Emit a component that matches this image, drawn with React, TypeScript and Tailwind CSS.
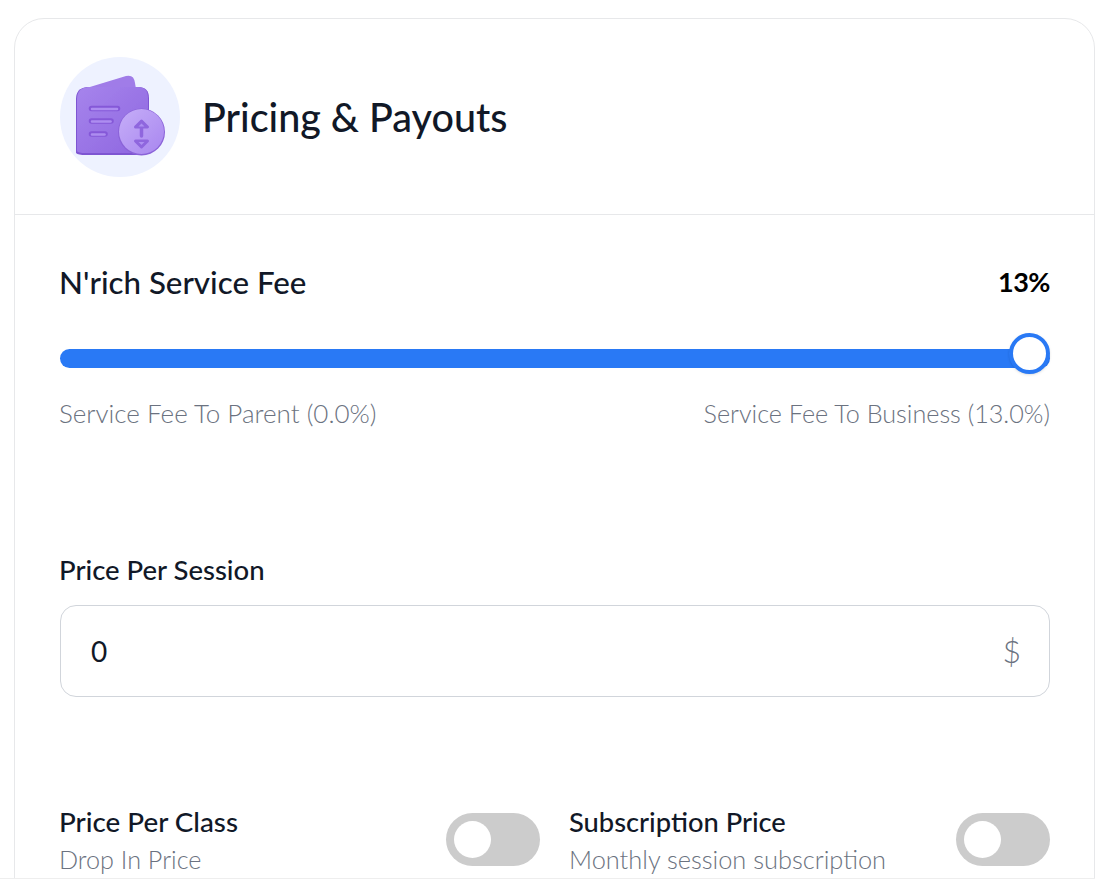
export default function App() {
  const sans = "font-['Lato','Noto_Sans',sans-serif]";
  return (
    <div className={`${sans} w-[1095px] h-[890px] bg-white overflow-hidden flex flex-col`}>
      <div className="h-[878px] pl-[14px] pt-[18px] overflow-hidden">
        <div className="w-[1081px] h-[900px] bg-white border border-[#e7e8ea] rounded-[30px]">
          <div className="h-[196px] border-b border-[#e7e8ea] pl-[45px] pt-[38px] flex items-start">
            <div className="w-[120px] h-[120px] rounded-full bg-[#eef2ff] flex items-center justify-center">
              <svg width="120" height="120" viewBox="0 0 120 120">
                <defs>
                  <linearGradient id="w1" x1="0" y1="0" x2="1" y2="1">
                    <stop offset="0" stopColor="#a684ec" />
                    <stop offset="1" stopColor="#8e66e0" />
                  </linearGradient>
                  <linearGradient id="w2" x1="0" y1="0" x2="1" y2="1">
                    <stop offset="0" stopColor="#c6aef8" />
                    <stop offset="1" stopColor="#a886ef" />
                  </linearGradient>
                  <filter id="b" x="-10%" y="-10%" width="120%" height="120%">
                    <feGaussianBlur stdDeviation="0.7" />
                  </filter>
                </defs>
                <g filter="url(#b)">
                  <path d="M20 33 L66 19 Q74 17 75 26 L77 38 L20 38 Z" fill="#a07ce8" />
                  <path d="M16 96 L16 42 Q16 31 27 30 L78 30 Q89 30 89 41 L89 90 Q89 98 80 98 L26 98 Q18 98 16 96 Z" fill="#7e54d2" />
                  <path d="M17 94 L17 42 Q17 31 28 30 L78 30 Q88 30 88 41 L88 88 Q88 96 80 96 L26 96 Q18 96 17 94 Z" fill="url(#w1)" />
                  <g fill="none" strokeLinecap="round">
                    <g strokeWidth="5.500" stroke="#8558d8">
                      <path d="M31.500 51.500 H57.500" />
                      <path d="M31.500 64 H51" />
                      <path d="M31.500 77 H45" />
                    </g>
                    <g strokeWidth="2.500" stroke="#ad8df0">
                      <path d="M32 52 H57" />
                      <path d="M32 64.500 H50.500" />
                      <path d="M32 77.500 H44.500" />
                    </g>
                  </g>
                  <circle cx="81.500" cy="75" r="23.500" fill="#8a62d8" />
                  <circle cx="81.500" cy="74.500" r="22.500" fill="url(#w2)" />
                  <g strokeLinecap="round" strokeLinejoin="round">
                    <g fill="#8f66de" stroke="#8f66de" strokeWidth="3">
                      <path d="M75.500 70 L81.500 64 L87.500 70 Z" />
                      <path d="M81.500 70 V79" strokeWidth="3.500" />
                      <path d="M75.500 84 L81.500 90 L87.500 84 Z" />
                    </g>
                    <g fill="#ae8ff2">
                      <path d="M78.500 69.500 L81.500 66.500 L84.500 69.500 Z" />
                      <path d="M78.500 85 L81.500 88 L84.500 85 Z" />
                    </g>
                  </g>
                </g>
              </svg>
            </div>
            <h1 className="ml-[22px] mt-[36px] text-[39.500px] leading-[48px] font-medium text-[#111827]">Pricing &amp; Payouts</h1>
          </div>
          <div className="pl-[45px] w-[1035px]">
            <div className="pt-[49px] flex justify-between items-center h-[85px]">
              <span className="-ml-px text-[31.300px] font-medium text-[#111827]">N'rich Service Fee</span>
              <span className="text-[27px] font-bold tracking-[-0.5px] text-black">13%</span>
            </div>
            <div className="mt-[37px] h-[42px] relative flex items-center">
              <div className="h-[19px] w-full bg-[#2979f5] rounded-full" />
              <div className="absolute right-0 top-[-4px] w-[41px] h-[41px] rounded-full bg-white border-[4px] border-[#2979f5] shadow-sm" />
            </div>
            <div className="mt-[19px] flex justify-between leading-[30px] text-[#6b7280] font-light">
              <span className="-ml-px text-[26px]">Service Fee To Parent (0.0%)</span>
              <span className="text-[25.200px]">Service Fee To Business (13.0%)</span>
            </div>
            <div className="-ml-px mt-[125px] text-[27.500px] leading-[34px] font-medium text-[#111827]">Price Per Session</div>
            <div className="mt-[18px] h-[92px] border border-[#d1d5db] rounded-[16px] flex items-center justify-between pl-[30px] pr-[28px]">
              <span className="text-[28px] text-[#111827]">0</span>
              <span className="text-[32px] text-[#6b7280] font-light">$</span>
            </div>
            <div className="mt-[107px] flex gap-[30px]">
              <Toggle title="Price Per Class" sub="Drop In Price" titleSize="text-[27.800px]" subSize="text-[25.200px]" />
              <Toggle title="Subscription Price" sub="Monthly session subscription" titleSize="text-[27.300px]" subSize="text-[25.400px]" />
            </div>
          </div>
        </div>
      </div>
      <div className="flex-1 border-t border-[#eeeeee] bg-white" />
    </div>
  );
}

function Toggle({ title, sub, titleSize, subSize }: { title: string; sub: string; titleSize: string; subSize: string }) {
  return (
    <div className="flex-1 flex justify-between items-center">
      <div className="-ml-px pt-px">
        <div className={`${titleSize} leading-[34px] font-medium text-[#111827]`}>{title}</div>
        <div className={`${subSize} mt-[5px] leading-[30px] font-light text-[#6b7280]`}>{sub}</div>
      </div>
      <div className="w-[94px] h-[53px] rounded-full bg-[#cccccc] flex items-center pl-[8px]">
        <div className="w-[37px] h-[37px] rounded-full bg-white" />
      </div>
    </div>
  );
}
